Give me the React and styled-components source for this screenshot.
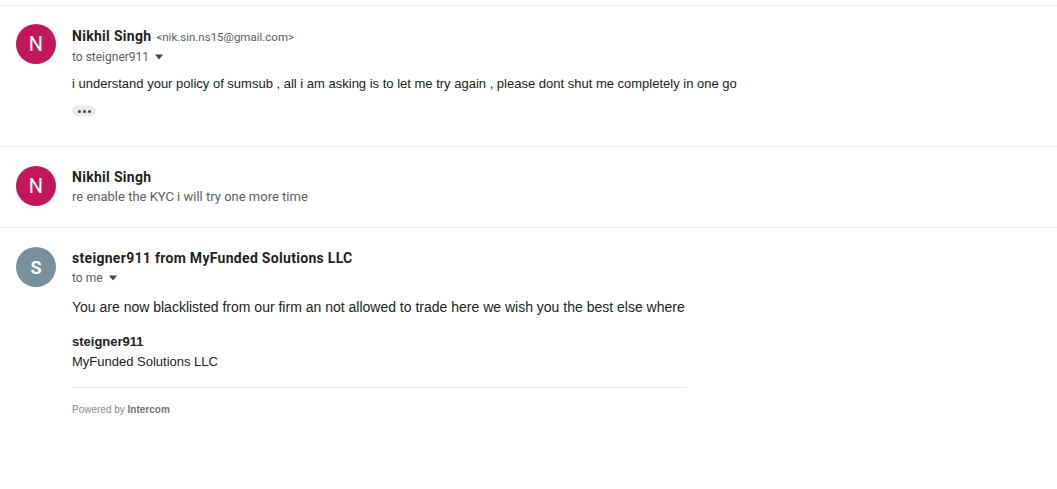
import React from "react";
import styled, { createGlobalStyle } from "styled-components";

const GlobalStyle = createGlobalStyle`
  body {
    margin: 0;
    background: #ffffff;
    font-family: "Liberation Sans", Arial, sans-serif;
    color: #222222;
  }
`;

const Thread = styled.div`
  width: 100%;
  padding-top: 5px;
`;

const Message = styled.div`
  display: flex;
  gap: 16px;
  padding: ${(p) => p.$pad || "18px 16px 20px 16px"};
  border-top: 1px solid #eceff1;
`;

const Avatar = styled.div`
  width: 40px;
  height: 40px;
  flex: 0 0 40px;
  border-radius: 50%;
  background: ${(p) => p.$color};
  color: #ffffff;
  display: flex;
  align-items: center;
  justify-content: center;
  font-family: Roboto, "Liberation Sans", sans-serif;
  font-size: ${(p) => p.$size || "20px"};
  font-weight: ${(p) => p.$weight || 400};
`;

const Content = styled.div`
  flex: 1;
  min-width: 0;
`;

const FromLine = styled.div`
  font-family: Roboto, "Liberation Sans", sans-serif;
  font-size: 14px;
  line-height: 20px;
  margin-top: ${(p) => p.$top || "0"};
`;

const Name = styled.span`
  font-weight: 700;
  color: #1f1f1f;
  letter-spacing: 0.3px;
`;

const Email = styled.span`
  font-size: 11.5px;
  color: #5e5e5e;
  margin-left: 5px;
`;

const ToLine = styled.div`
  display: flex;
  align-items: center;
  gap: 5px;
  font-family: Roboto, "Liberation Sans", sans-serif;
  font-size: 12px;
  line-height: 20px;
  color: #5e5e5e;
`;

const Snippet = styled.div`
  font-family: Roboto, "Liberation Sans", sans-serif;
  font-size: 13px;
  line-height: 19px;
  color: #5e5e5e;
`;

const Body = styled.div`
  font-size: ${(p) => p.$size || "14px"};
  line-height: 20px;
  color: #222222;
  margin-top: ${(p) => p.$top || "7px"};
`;

const Dots = styled.div`
  margin-top: 12px;
  width: 24px;
  height: 10px;
  border-radius: 5px;
  background: #e8eaed;
  display: flex;
  align-items: center;
  justify-content: center;
  gap: 2px;

  span {
    width: 3px;
    height: 3px;
    border-radius: 50%;
    background: #444746;
  }
`;

const Signature = styled.div`
  margin-top: 15px;
  font-size: 13px;
  line-height: 20px;

  b {
    font-weight: 700;
  }
`;

const Footer = styled.div`
  width: 614px;
  margin-top: 15px;
  border-top: 1px solid #e8eaed;
  padding-top: 12px;
  font-size: 10px;
  line-height: 20px;
  color: #8a8a8a;

  b {
    font-weight: 700;
    color: #737373;
  }
`;

const Caret = () => (
  <svg width="10" height="6" viewBox="0 0 10 6">
    <path d="M1 0.5 L9 0.5 L5 5.5 Z" fill="#444746" />
  </svg>
);

export default function App() {
  return (
    <>
      <GlobalStyle />
      <Thread>
        <Message $pad="18px 16px 30px 16px">
          <Avatar $color="#c2185b">N</Avatar>
          <Content>
            <FromLine $top="2px">
              <Name>Nikhil Singh</Name>
              <Email>&lt;nik.sin.ns15@gmail.com&gt;</Email>
            </FromLine>
            <ToLine>
              to steigner911 <Caret />
            </ToLine>
            <Body $size="13px">
              i understand your policy of sumsub , all i am asking is to let me
              try again , please dont shut me completely in one go
            </Body>
            <Dots>
              <span />
              <span />
              <span />
            </Dots>
          </Content>
        </Message>
        <Message $pad="19px 16px 21px 16px">
          <Avatar $color="#c2185b">N</Avatar>
          <Content>
            <FromLine $top="1px">
              <Name>Nikhil Singh</Name>
            </FromLine>
            <Snippet>re enable the KYC i will try one more time</Snippet>
          </Content>
        </Message>
        <Message $pad="19px 16px 20px 16px">
          <Avatar $color="#78909c" $size="18px" $weight={700}>
            S
          </Avatar>
          <Content>
            <FromLine $top="1px">
              <Name>steigner911 from MyFunded Solutions LLC</Name>
            </FromLine>
            <ToLine>
              to me <Caret />
            </ToLine>
            <Body $top="9px">
              You are now blacklisted from our firm an not allowed to trade here
              we wish you the best else where
            </Body>
            <Signature>
              <b>steigner911</b>
              <br />
              MyFunded Solutions LLC
            </Signature>
            <Footer>
              Powered by <b>Intercom</b>
            </Footer>
          </Content>
        </Message>
      </Thread>
    </>
  );
}
